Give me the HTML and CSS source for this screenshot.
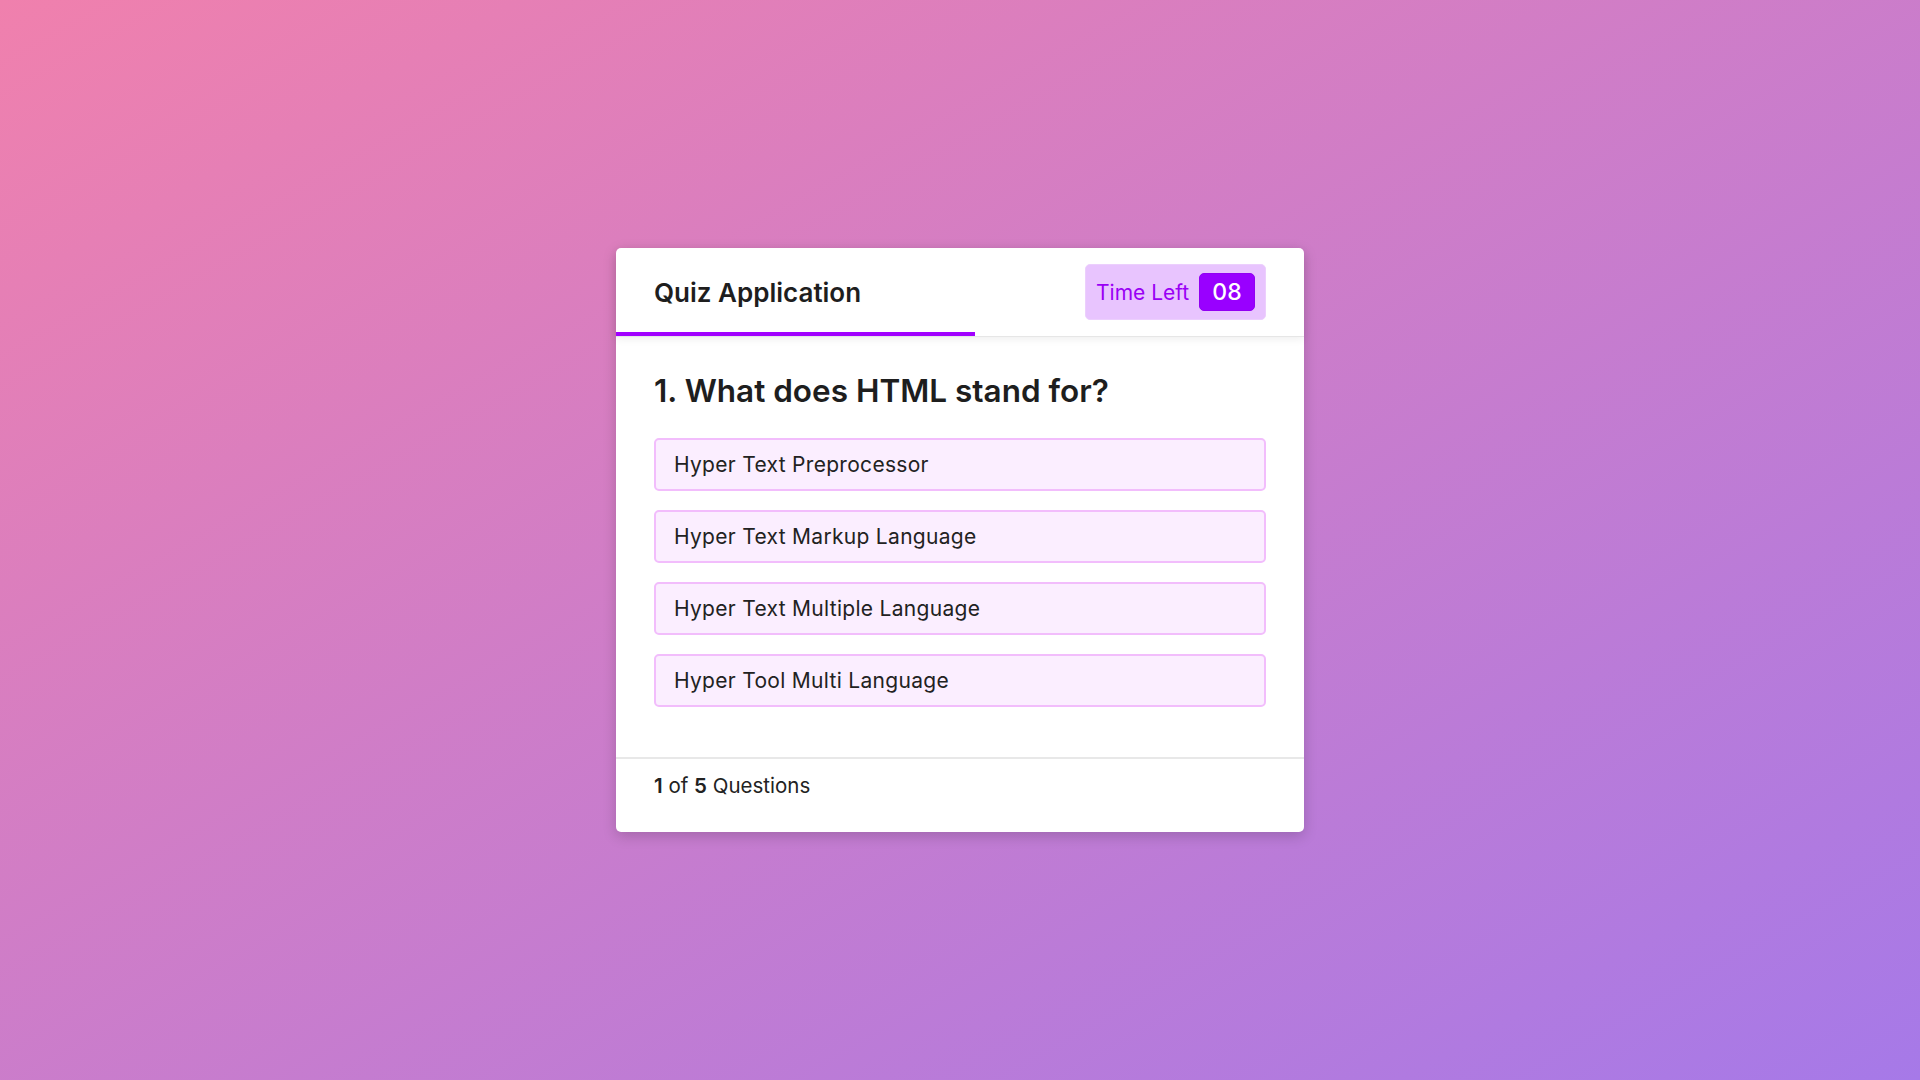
FILE: index.html
```html
<!DOCTYPE html>
<html lang="en">
<head>
<meta charset="utf-8">
<title>Quiz Application</title>
<link rel="stylesheet" href="styles.css">
</head>
<body>
  <div class="quiz-box">
    <header class="quiz-header">
      <div class="title">Quiz Application</div>
      <div class="timer">
        <span class="timer-text">Time Left</span>
        <span class="timer-sec">08</span>
      </div>
      <div class="time-line"></div>
    </header>
    <section class="quiz-body">
      <div class="question">1. What does HTML stand for?</div>
      <div class="options">
        <div class="option">Hyper Text Preprocessor</div>
        <div class="option">Hyper Text Markup Language</div>
        <div class="option">Hyper Text Multiple Language</div>
        <div class="option">Hyper Tool Multi Language</div>
      </div>
    </section>
    <footer class="quiz-footer">
      <span class="total"><b>1</b> of <b>5</b> Questions</span>
    </footer>
  </div>
</body>
</html>
```
FILE: styles.css
```css
* {
  box-sizing: border-box;
}
html, body {
  margin: 0;
  padding: 0;
}
body {
  height: 100vh;
  display: flex;
  align-items: center;
  justify-content: center;
  background: linear-gradient(to bottom right, #f080ad, #a679e8);
  font-family: "Inter", "Open Sans", sans-serif;
  color: #222;
}
.quiz-box {
  width: 688px;
  background: #fff;
  border-radius: 5px;
  box-shadow: 0 4px 14px rgba(0, 0, 0, 0.18);
}
.quiz-header {
  position: relative;
  height: 88px;
  padding: 0 38px;
  display: flex;
  align-items: center;
  justify-content: space-between;
  border-radius: 5px 5px 0 0;
  box-shadow: 0 1px 0 #e6e6e6, 0 3px 8px rgba(0, 0, 0, 0.07);
  z-index: 1;
}
.title {
  font-size: 26px;
  font-weight: 600;
  color: #1e1e1e;
}
.timer {
  width: 181px;
  height: 56px;
  padding: 0 10px;
  display: flex;
  align-items: center;
  justify-content: space-between;
  background: #e8c4fe;
  border: 1px solid #eccffd;
  border-radius: 5px;
}
.timer-text {
  font-size: 21px;
  font-weight: 400;
  color: #9a00f5;
}
.timer-sec {
  width: 56px;
  height: 38px;
  display: flex;
  align-items: center;
  justify-content: center;
  background: #9900ff;
  border: 1px solid #9200f2;
  border-radius: 5px;
  color: #fff;
  font-size: 23px;
  font-weight: 500;
}
.time-line {
  position: absolute;
  left: 0;
  bottom: 0;
  width: 359px;
  height: 4px;
  background: #a100ff;
}
.quiz-body {
  padding: 32px 38px 50px;
}
.question {
  font-size: 31.5px;
  font-weight: 600;
  line-height: 45px;
  color: #1e1e1e;
}
.options {
  margin-top: 25px;
  display: flex;
  flex-direction: column;
  gap: 19px;
}
.option {
  height: 53px;
  padding: 0 18px;
  display: flex;
  align-items: center;
  background: #fbeeff;
  border: 2px solid #f2bdfc;
  border-radius: 5px;
  font-size: 21px;
  letter-spacing: 0.3px;
  color: #222;
}
.quiz-footer {
  border-top: 2px solid #e8e8e8;
  padding: 12px 38px 31px;
  line-height: 30px;
  font-size: 20.5px;
  color: #222;
}
.total b {
  font-weight: 600;
}
```
